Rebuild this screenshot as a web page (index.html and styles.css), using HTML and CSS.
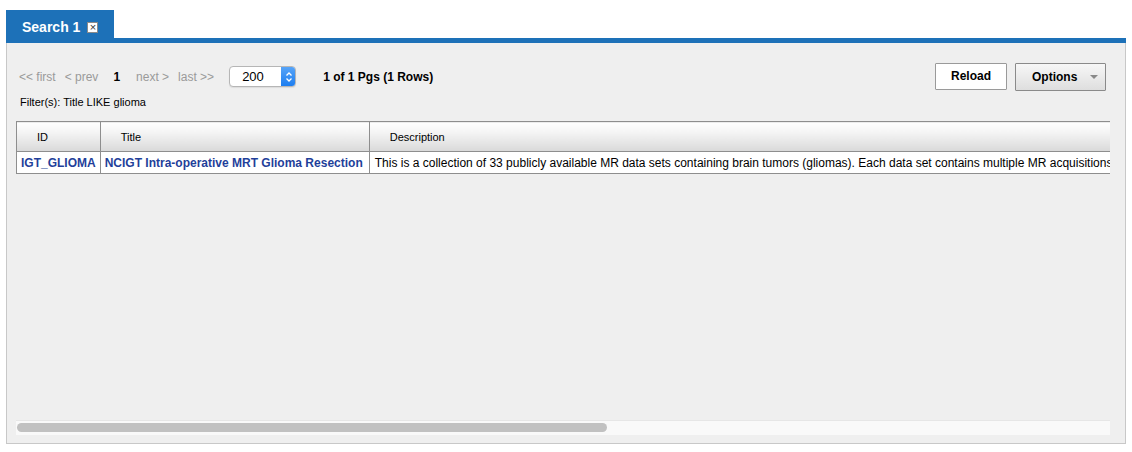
FILE: index.html
```html
<!DOCTYPE html>
<html>
<head>
<meta charset="utf-8">
<link rel="stylesheet" href="styles.css">
</head>
<body>
<div class="tabbar">
  <div class="tab">
    <span class="tab-label">Search 1</span>
    <span class="tab-close">×</span>
  </div>
</div>
<div class="tabline"></div>
<div class="panel">
  <div class="toolbar">
    <div class="pager">
      <span class="pg dis">&lt;&lt; first</span>
      <span class="pg dis">&lt; prev</span>
      <span class="pg cur">1</span>
      <span class="pg dis">next &gt;</span>
      <span class="pg dis">last &gt;&gt;</span>
      <div class="select">
        <span class="select-val">200</span>
        <span class="stepper">
          <svg width="8" height="12" viewBox="0 0 8 12"><path d="M1.5 4.5 L4 2 L6.5 4.5 M1.5 7.5 L4 10 L6.5 7.5" fill="none" stroke="#fff" stroke-width="1.3"/></svg>
        </span>
      </div>
      <span class="count">1 of 1 Pgs (1 Rows)</span>
    </div>
    <div class="actions">
      <button class="btn">Reload</button>
      <button class="btn opt">Options <span class="caret"></span></button>
    </div>
  </div>
  <div class="filter">Filter(s): Title LIKE glioma</div>
  <div class="grid-wrap">
    <div class="grid-scroll">
      <table class="grid">
        <thead>
          <tr>
            <th class="c-id">ID</th>
            <th class="c-title">Title</th>
            <th class="c-desc">Description</th>
          </tr>
        </thead>
        <tbody>
          <tr>
            <td class="c-id link">IGT_GLIOMA</td>
            <td class="c-title link">NCIGT Intra-operative MRT Glioma Resection</td>
            <td class="c-desc">This is a collection of 33 publicly available MR data sets containing brain tumors (gliomas). Each data set contains multiple MR acquisitions</td>
          </tr>
        </tbody>
      </table>
    </div>
    <div class="hscroll"><div class="thumb"></div></div>
  </div>
</div>
</body>
</html>
```

FILE: styles.css
```css
* { box-sizing: border-box; }
html, body { margin: 0; padding: 0; background: #fff; }
body {
  font-family: "Liberation Sans", Arial, Helvetica, sans-serif;
  color: #000;
  width: 1132px;
  height: 452px;
  overflow: hidden;
}
.tabbar {
  padding: 10px 0 0 6px;
  display: flex;
}
.tab {
  width: 108px;
  height: 28px;
  background: #1d71b8;
  display: flex;
  align-items: center;
  padding: 5px 0 0 16px;
  gap: 7px;
}
.tab-label {
  color: #fff;
  font-size: 14px;
  font-weight: bold;
}
.tab-close {
  width: 11px;
  height: 11px;
  background: #fff;
  border: 1px solid #8a8a8a;
  color: #333;
  font-size: 11px;
  line-height: 8px;
  text-align: center;
  display: inline-block;
  margin-top: 1px;
}
.tabline {
  margin: 0 6px;
  height: 5px;
  background: #1d71b8;
}
.panel {
  margin: 0 6px;
  height: 401px;
  background: #efefef;
  border: 1px solid #c8c8c8;
  border-top: none;
  padding: 20px 0 0 9px;
}
.toolbar {
  display: flex;
  justify-content: space-between;
  align-items: center;
  height: 27px;
  padding-right: 19px;
}
.pager {
  display: flex;
  align-items: center;
  font-size: 12px;
  padding-left: 3px;
}
.pg { margin-right: 9px; }
.pg.dis { color: #9a9a9a; }
.pg.cur { font-weight: bold; margin: 0 16px 0 6px; }
.select {
  margin-left: 6px;
  width: 67px;
  height: 21px;
  background: #fff;
  border: 1px solid #b6b6b6;
  border-radius: 4px;
  display: flex;
  align-items: center;
  justify-content: space-between;
  overflow: hidden;
  box-shadow: 0 1px 1px rgba(0,0,0,0.08);
}
.select-val { padding-left: 12px; font-size: 13px; }
.stepper {
  width: 15px;
  height: 21px;
  background: linear-gradient(#5aa6f8, #1a7cf0);
  display: flex;
  align-items: center;
  justify-content: center;
  margin-right: -1px;
}
.count {
  margin-left: 27px;
  font-weight: bold;
  font-size: 12px;
}
.actions { display: flex; gap: 8px; }
.btn {
  font-family: inherit;
  font-size: 12px;
  font-weight: bold;
  color: #000;
  height: 27px;
  border: 1px solid #9a9a9a;
  background: #fff;
  padding: 0 16px;
  border-radius: 1px;
}
.btn:first-child { width: 72px; padding: 0; }
.btn.opt {
  width: 91px;
  height: 28px;
  background: linear-gradient(#f7f7f7, #dedede);
  border-color: #8a8a8a;
  display: flex;
  align-items: center;
  padding-left: 16px;
}
.caret {
  display: inline-block;
  margin-left: 13px;
  border-left: 4px solid transparent;
  border-right: 4px solid transparent;
  border-top: 4px solid #888;
}
.filter {
  font-size: 11px;
  margin-top: 6px;
  padding-left: 4px;
  height: 25px;
}
.grid-wrap {
  width: 1094px;
}
.grid-scroll {
  overflow: hidden;
  height: 299px;
}
.grid {
  border-collapse: collapse;
  font-size: 12px;
  white-space: nowrap;
}
.grid th {
  height: 30px;
  font-weight: normal;
  font-size: 11px;
  text-align: left;
  padding: 0 0 0 20px;
  border: 1px solid #8e8e8e;
  background: linear-gradient(#ffffff 0%, #f4f4f4 35%, #d9d9d9 100%);
}
.grid td {
  height: 22px;
  padding: 0 4px;
  border: 1px solid #8e8e8e;
  background: #fff;
}
.grid td.c-title { padding-right: 6px; }
.grid td.c-desc { padding-left: 5px; }
.grid .c-id { width: 85px; }
.grid .c-title { width: 271px; }
.grid th.c-desc { width: 1200px; }
.grid td.link { color: #1f3f9a; font-weight: bold; }
.hscroll {
  height: 15px;
  background: #f9f9f9;
  border-top: 1px solid #e6e6e6;
  padding: 2px 0 0 1px;
}
.thumb {
  width: 590px;
  height: 9px;
  background: #c1c1c1;
  border-radius: 5px;
}
```
